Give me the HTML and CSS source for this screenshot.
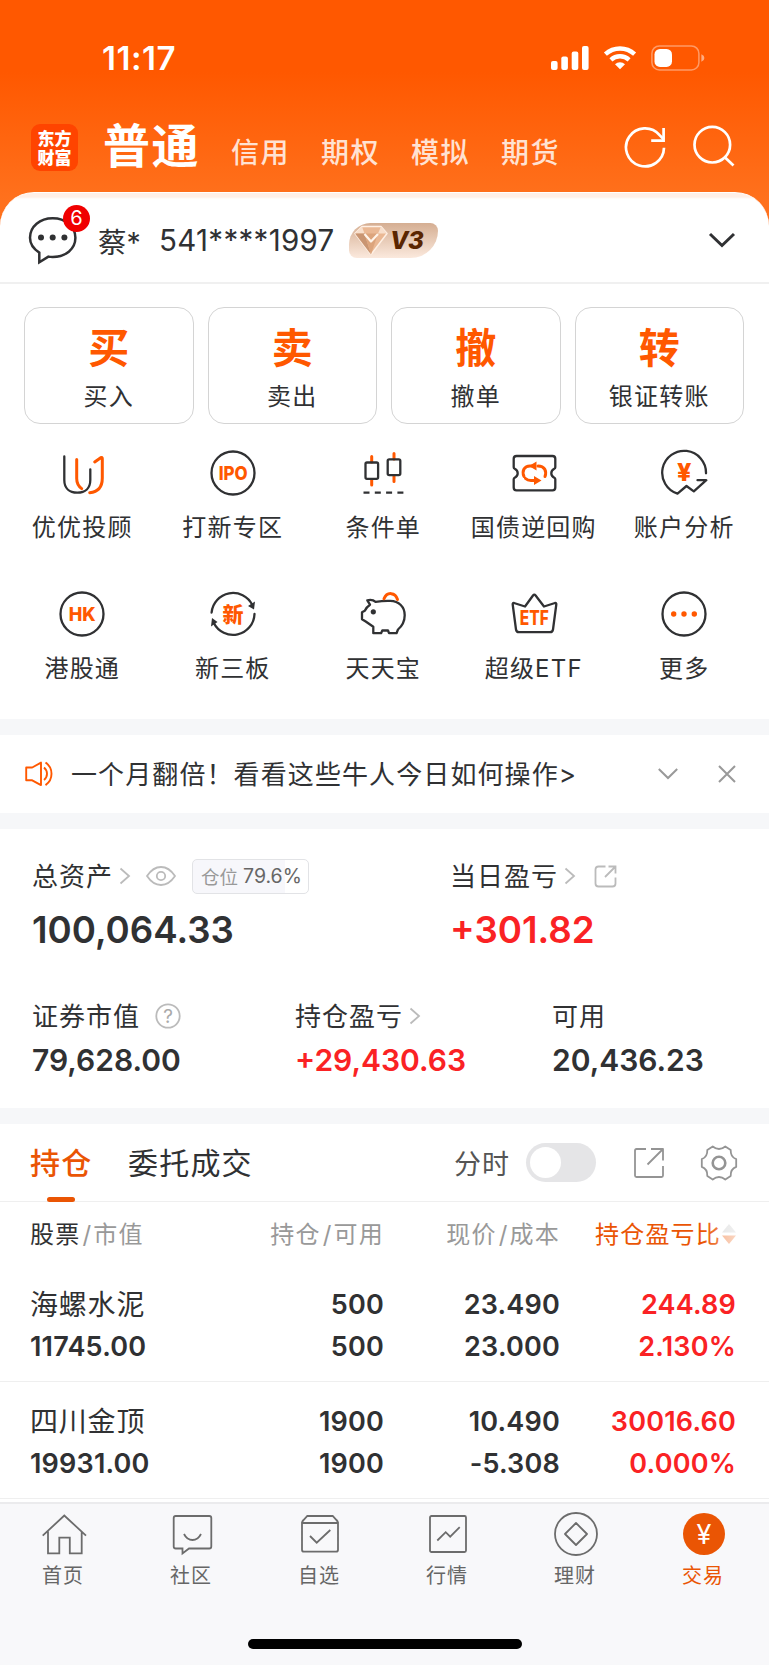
FILE: index.html
```html
<!DOCTYPE html>
<html lang="zh-CN">
<head>
  <meta charset="UTF-8" />
  <meta name="viewport" content="width=device-width, initial-scale=1.0"/>
  <title>交易</title>
  <link rel="stylesheet" href="styles.css">
</head>
<body>

  <header class="header">
    <div class="status-bar">
      <span class="time">11:17</span>
      <svg class="signal" width="38" height="24" viewBox="0 0 38 24" fill="#fff">
        <rect x="0" y="15" width="6.6" height="9" rx="2"/>
        <rect x="10.3" y="10.5" width="6.6" height="13.5" rx="2"/>
        <rect x="20.7" y="5.5" width="6.6" height="18.5" rx="2"/>
        <rect x="31" y="0" width="6.6" height="24" rx="2"/>
      </svg>
      <svg class="wifi" width="34" height="25" viewBox="0 0 34 25" fill="none" stroke="#fff" stroke-width="4.4">
        <path d="M2.4 9.2a21.5 21.5 0 0 1 29.2 0"/>
        <path d="M7.9 14.8a13.6 13.6 0 0 1 18.2 0"/>
        <path d="M17 24.3l-5-5a7.4 7.4 0 0 1 10 0z" fill="#fff" stroke="none"/>
      </svg>
      <svg class="battery" width="54" height="26" viewBox="0 0 54 26">
        <rect x="0.9" y="0.9" width="47" height="24" rx="7.5" fill="none" stroke="#fff" stroke-opacity=".4" stroke-width="1.5"/>
        <rect x="3.5" y="3.9" width="17.5" height="18" rx="5.5" fill="#fff"/>
        <path d="M50.4 9.2q3 1.2 3 3.8t-3 3.8z" fill="#fff" fill-opacity=".5"/>
      </svg>
    </div>

    <div class="top-nav">
      <div class="logo">东方<br>财富</div>
      <nav class="accounts">
        <span class="account-tab current">普通</span>
        <span class="account-tab">信用</span>
        <span class="account-tab">期权</span>
        <span class="account-tab">模拟</span>
        <span class="account-tab">期货</span>
      </nav>
      <svg class="refresh" width="44" height="44" viewBox="0 0 44 44" fill="none" stroke="#fff" stroke-width="2.7">
        <path d="M41 22.8A19 19 0 1 1 36.6 10.2L40.6 14.3"/>
        <path d="M40.6 3v12.6H28.2"/>
      </svg>
      <svg class="search" width="44" height="44" viewBox="0 0 44 44" fill="none" stroke="#fff" stroke-width="2.7">
        <circle cx="20.3" cy="19.7" r="17.8"/>
        <path d="M32.5 32l9 8.6"/>
      </svg>
    </div>
  </header>

  <main>
    <section class="user-row">
      <div class="message">
        <svg width="50" height="50" viewBox="0 0 50 50" fill="none" stroke="#303133" stroke-width="2.5">
          <path d="M11.3 47.3V37.6C5.3 33.8 2 28.6 2 22.8 2 11.4 12 3.3 24.7 3.3S47.4 11.4 47.4 22.8 37.4 42 24.7 42c-1.5 0-3-.1-4.3-.4z"/>
          <g fill="#303133" stroke="none"><circle cx="13" cy="22.6" r="3"/><circle cx="24.7" cy="22.6" r="3"/><circle cx="36.4" cy="22.6" r="3"/></g>
        </svg>
        <span class="badge">6</span>
      </div>
      <span class="user-name">蔡*</span>
      <span class="user-id">541****1997</span>
      <div class="level">
        <svg width="34" height="31" viewBox="0 0 34 31" stroke-linejoin="round">
          <path d="M8 1.5h19l6 7-16 21L1 8.5z" fill="#eab894" stroke="#fff0e4" stroke-width="1.5"/>
          <path d="M8 1.5l2.5 7H1zM27 1.5l-3 7h9z" fill="#f8dfcc"/>
          <path d="M10.5 8.5L17 29.5 1 8.5z" fill="#c99572"/>
          <path d="M10.5 8.5H24l-7 21z" fill="#dca47c"/>
          <path d="M10.5 9l6.5 7.5L24 9" fill="none" stroke="#fff4ea" stroke-width="2.2"/>
        </svg>
        <span class="level-text">V3</span>
      </div>
      <svg class="expand" width="28" height="18" viewBox="0 0 28 18" fill="none" stroke="#303133" stroke-width="3"><path d="M2 3l12 11.5L26 3"/></svg>
    </section>

    <section class="actions">
      <div class="action"><b>买</b><span>买入</span></div>
      <div class="action"><b>卖</b><span>卖出</span></div>
      <div class="action"><b>撤</b><span>撤单</span></div>
      <div class="action"><b>转</b><span>银证转账</span></div>
    </section>

    <section class="services">
      <div class="service">
        <svg viewBox="0 0 48 48"><path class="dark" d="M6.3 7.5V31c0 8 5 12.7 13 12.7s13-4.7 13-12.7V20.3"/><path class="hot" d="M18.7 10.6V29.5q0 6.5 5 10.1M36.7 13l6-4.3q1.600-.8 1.600 1.100V29c0 9.500-4.800 14-12.600 14.700"/></svg>
        <span>优优投顾</span>
      </div>
      <div class="service">
        <svg viewBox="0 0 48 48"><circle class="dark" cx="24" cy="24" r="21.5"/><text class="icon-text" x="24.2" y="31" font-size="19" textLength="29" lengthAdjust="spacingAndGlyphs">IPO</text></svg>
        <span>打新专区</span>
      </div>
      <div class="service">
        <svg viewBox="0 0 48 48"><path class="hot" d="M12.7 7.5V13M12.7 31v5M35 4.5V10M35 27v5.5"/><rect class="dark" x="6.5" y="13.5" width="12.6" height="16.3" rx="1.5"/><rect class="dark" x="28.7" y="10.3" width="12.6" height="15.8" rx="1.5"/><path class="dark dashed" d="M4.5 43.6h40"/></svg>
        <span>条件单</span>
      </div>
      <div class="service">
        <svg viewBox="0 0 48 48"><path class="dark" d="M6.5 7h36q2.8 0 2.8 2.8v8.5q0 1-1 1.5-3 1.5-3 4.5t3 4.5q1 .5 1 1.5v8.2q0 2.8-2.8 2.8h-36q-2.8 0-2.8-2.8v-8.2q0-1 1-1.5 3-1.5 3-4.5t-3-4.5q-1-.5-1-1.5V9.800Q3.700 7 6.500 7z"/><path class="hot" d="M14 27.500c-2.500-6 .5-10.600 6-10.600M28 16.900c6.500 0 9 5 7 10.600M15.500 29.500q2 2 5.500 2h4M20 16.900h3"/><path class="fill" d="M19 17l7.500-4.500v9zM31.500 31.500L24 27v9z"/></svg>
        <span>国债逆回购</span>
      </div>
      <div class="service">
        <svg viewBox="0 0 48 48"><path class="dark" d="M46 24.3A21.900 21.900 0 1 0 17.500 44.600L26.500 37l7.300 5.400L46.300 31.200h-8.800"/><text class="icon-text" x="24.3" y="31.5" font-size="25">¥</text></svg>
        <span>账户分析</span>
      </div>
      <div class="service">
        <svg viewBox="0 0 48 48"><circle class="dark" cx="24" cy="24" r="21.5"/><text class="icon-text" x="24.2" y="31" font-size="19" textLength="27" lengthAdjust="spacingAndGlyphs">HK</text></svg>
        <span>港股通</span>
      </div>
      <div class="service">
        <svg viewBox="0 0 48 48"><path class="dark" d="M2.600 22.500A21.500 21.500 0 0 1 43.300 15M45.500 24A21.500 21.500 0 0 1 4.800 33"/><path fill="#303133" d="M46 11.500l-1 8-6-3.500zM2 36.500l1-8.500 5.500 4z"/><text class="icon-text" x="24" y="31.5" font-size="21">新</text></svg>
        <span>新三板</span>
      </div>
      <div class="service">
        <svg viewBox="0 0 48 48"><path class="dark" d="M8.300 10.300q5-1.300 8.300 1.600 8-1.300 14.500-1c9 .3 14.600 6 14.600 14.300 0 7-3.500 11.500-6.700 14.300L37.500 43.200h-7.500l-1-2.700H23.300l-1.200 2.700h-7.800V36.700L6.700 31.500l-3.700-2.300v-7l2.800-1.500q1.500-3.500 5.200-6z"/><circle cx="14.3" cy="21.8" r="2.6" fill="#303133"/><path class="hot" d="M25 8.800c3-7.500 11.500-6.500 13.500.7"/></svg>
        <span>天天宝</span>
      </div>
      <div class="service">
        <svg viewBox="0 0 48 48"><path class="dark" d="M4 13l11 3.500L23 5.500q1.300-1.700 2.600 0L34 16.500 45 13q1.500-.2 1.300 1.500L43 39.500q-.4 2.700-3 2.700H9q-2.600 0-3-2.700L2.700 14.500Q2.500 12.800 4 13z"/><text class="icon-text" x="24.3" y="34.5" font-size="20" textLength="29" lengthAdjust="spacingAndGlyphs">ETF</text></svg>
        <span>超级ETF</span>
      </div>
      <div class="service">
        <svg viewBox="0 0 48 48"><circle class="dark" cx="24" cy="24" r="21.5"/><g class="fill"><circle cx="13.7" cy="24" r="2.7"/><circle cx="24" cy="24" r="2.7"/><circle cx="34.3" cy="24" r="2.7"/></g></svg>
        <span>更多</span>
      </div>
    </section>

    <section class="notice">
      <svg width="28" height="26" viewBox="0 0 28 26" fill="none" stroke="#ff5800" stroke-width="1.9" stroke-linejoin="round">
        <path d="M1.200 6.500h6L16 1.600v22.500l-8.800-4.800h-6z"/>
        <path d="M19 6.500q3 2.500 3 6.300T19 19M20.500 1.500q6 4 6 11.300t-6 11.300"/>
      </svg>
      <p>一个月翻倍！看看这些牛人今日如何操作&gt;</p>
      <svg class="fold" width="20" height="14" viewBox="0 0 20 14" fill="none" stroke="#999" stroke-width="2"><path d="M.8 2l9.200 9L19.200 2"/></svg>
      <svg class="close" width="18" height="18" viewBox="0 0 18 18" fill="none" stroke="#999" stroke-width="2"><path d="M1 1l16 16M17 1L1 17"/></svg>
    </section>

    <section class="assets">
      <div class="totals">
        <div class="asset">
          <div class="label"><span>总资产</span>
            <svg class="arrow" width="12" height="18" viewBox="0 0 12 18"><path d="M1.500 1.500L10 9l-8.500 7.500"/></svg>
            <svg class="eye" width="30" height="20" viewBox="0 0 30 20"><path d="M1 10Q7 1 15 1t14 9q-6 9-14 9T1 10z"/><circle cx="15" cy="10" r="4.2"/></svg>
            <div class="position">仓位<em>79.6%</em></div>
          </div>
          <div class="amount">100,064.33</div>
        </div>
        <div class="asset">
          <div class="label"><span>当日盈亏</span>
            <svg class="arrow" width="12" height="18" viewBox="0 0 12 18"><path d="M1.500 1.500L10 9l-8.500 7.500"/></svg>
            <svg class="share" width="23" height="23" viewBox="0 0 23 23"><path d="M11.500 1.500H4.500q-3 0-3 3v14q0 3 3 3h14q3 0 3-3v-6M14.500 1.500h7v7M21 2L11 12"/></svg>
          </div>
          <div class="amount up">+301.82</div>
        </div>
      </div>
      <div class="details">
        <div class="asset">
          <div class="label"><span>证券市值</span>
            <svg class="help" width="26" height="26" viewBox="0 0 26 26"><circle cx="13" cy="13" r="11.7"/><text x="13" y="20">?</text></svg>
          </div>
          <div class="amount">79,628.00</div>
        </div>
        <div class="asset">
          <div class="label"><span>持仓盈亏</span>
            <svg class="arrow" width="12" height="18" viewBox="0 0 12 18"><path d="M1.500 1.500L10 9l-8.500 7.500"/></svg>
          </div>
          <div class="amount up">+29,430.63</div>
        </div>
        <div class="asset">
          <div class="label"><span>可用</span></div>
          <div class="amount">20,436.23</div>
        </div>
      </div>
    </section>

    <section class="holdings">
      <div class="tabs">
        <span class="tab active">持仓</span>
        <span class="tab">委托成交</span>
        <span class="switch-label">分时</span>
        <span class="switch"></span>
        <svg class="export" width="32" height="32" viewBox="0 0 32 32"><path d="M13 2H3.500Q2 2 2 3.500v25Q2 30 3.500 30h25q1.500 0 1.500-1.500V19M18 2h12v11.500M29.500 2.500L14.500 17.500"/></svg>
        <svg class="gear" width="38" height="38" viewBox="0 0 38 38"><path d="M12.700 2.500q6.300 5 12.600 0l5.400 3.600q-.3 6.900 5.500 9v7.800q-5.800 2.100-5.500 9l-5.400 3.600q-6.300-5-12.600 0l-5.400-3.600q.3-6.900-5.500-9v-7.800q5.800-2.100 5.500-9z"/><circle cx="19" cy="19" r="6.3"/></svg>
      </div>

      <div class="row table-head">
        <span><i>股票</i><em>/</em>市值</span>
        <span>持仓<em>/</em>可用</span>
        <span>现价<em>/</em>成本</span>
        <span class="sort">持仓盈亏比<svg width="16" height="22" viewBox="0 0 16 22"><path d="M8 1l7 8.500H1z" fill="#dedede"/><path d="M8 21l7-8.500H1z" fill="#f5a67a"/></svg></span>
      </div>
      <div class="row stock">
        <div><p class="name">海螺水泥</p><p>11745.00</p></div>
        <div><p>500</p><p>500</p></div>
        <div><p>23.490</p><p>23.000</p></div>
        <div class="up"><p>244.89</p><p>2.130%</p></div>
      </div>
      <div class="row stock">
        <div><p class="name">四川金顶</p><p>19931.00</p></div>
        <div><p>1900</p><p>1900</p></div>
        <div><p>10.490</p><p>-5.308</p></div>
        <div class="up"><p>30016.60</p><p>0.000%</p></div>
      </div>
    </section>
  </main>

  <footer class="footer">
    <nav class="bottom-nav">
      <a class="nav-item"><svg viewBox="0 0 48 48"><path d="M2.700 25.700L24.300 5.500 46 25.700M8 21.500v21.800h11.300V27.700h10.500v15.600h11.900V21.500"/></svg><span>首页</span></a>
      <a class="nav-item"><svg viewBox="0 0 48 48"><path d="M7.700 6h33.600q2 0 2 2v28.500q0 2-2 2H21l-6.500 5v-5H7.700q-2 0-2-2V8q0-2 2-2zM16 24q3 6 8.500 6t8.500-6"/></svg><span>社区</span></a>
      <a class="nav-item"><svg viewBox="0 0 48 48"><path d="M6 13v26.700q0 2 2 2h32q2 0 2-2V13zM6 13q0-1.500 1.500-3L11.300 6h25.400l3.800 4Q42 11.500 42 13M14 26l6.700 6.700L34.300 20"/></svg><span>自选</span></a>
      <a class="nav-item"><svg viewBox="0 0 48 48"><rect x="6" y="6" width="36" height="36" rx="1.5"/><path d="M13.300 30.500l8.400-8.300 4.500 4.500 9.500-9.500"/></svg><span>行情</span></a>
      <a class="nav-item"><svg viewBox="0 0 48 48"><circle cx="24" cy="24" r="21"/><path d="M24 13L35 24 24 35 13 24z" stroke-linejoin="round"/></svg><span>理财</span></a>
      <a class="nav-item selected"><svg viewBox="0 0 48 48"><circle cx="24" cy="24" r="21"/><text x="24" y="34">¥</text></svg><span>交易</span></a>
    </nav>
    <div class="home-indicator"></div>
  </footer>

</body>
</html>
```
FILE: styles.css
```css
* {
  box-sizing: border-box;
}

body {
  margin: 0;
  width: 769px;
  height: 1665px;
  overflow: hidden;
  background: #fff;
  color: #303133;
  font-family: Inter, "Noto Sans CJK SC", sans-serif;
}

p {
  margin: 0;
}

em, i {
  font-style: normal;
}

svg {
  display: block;
  flex-shrink: 0;
}

.up {
  color: #fa2224;
}

/* orange header */
.header {
  height: 236px;
  background: linear-gradient(#ff5800 0, #ff5800 72px, #ff711d 200px);
}

.status-bar {
  display: flex;
  align-items: center;
  height: 115px;
  padding-left: 102px;
}

.time {
  width: 449px;
  font-size: 33px;
  font-weight: 600;
  letter-spacing: 0.5px;
  color: #fff;
}

.wifi {
  margin-left: 14px;
}

.battery {
  margin-left: 14px;
}

.top-nav {
  display: flex;
  align-items: center;
  height: 64px;
  padding-left: 31px;
}

.logo {
  width: 47px;
  height: 47px;
  padding-top: 4px;
  border-radius: 9px;
  background: #ff4400;
  color: #fff;
  font-family: "Noto Sans CJK SC", sans-serif;
  font-size: 17px;
  font-weight: 900;
  line-height: 19px;
  text-align: center;
}

.accounts {
  display: flex;
  align-items: baseline;
  gap: 31px;
  width: 546px;
  margin-top: 5px;
  margin-left: 25px;
}

.account-tab {
  color: rgba(255, 255, 255, 0.82);
  font-size: 28px;
  font-weight: 500;
  letter-spacing: 1.5px;
  line-height: 60px;
}

.account-tab.current {
  color: #fff;
  font-size: 47px;
  font-weight: 700;
}

.refresh {
  margin-left: -26px;
}

.search {
  margin-left: 25px;
}

/* account line */
.user-row {
  position: relative;
  display: flex;
  align-items: center;
  height: 92px;
  margin-top: -44px;
  padding-top: 5px;
  padding-left: 28px;
  border-top: 1px solid #fff;
  border-bottom: 2px solid #f0f0f0;
  border-radius: 34px 34px 0 0;
  background: linear-gradient(#fff0e8 0, #fff0e8 4px, #fff 6px);
}

.message {
  position: relative;
}

.badge {
  position: absolute;
  top: -10px;
  left: 35px;
  width: 27px;
  height: 27px;
  border-radius: 50%;
  background: #f00000;
  color: #fff;
  font-size: 20px;
  line-height: 27px;
  text-align: center;
}

.user-name {
  width: 61px;
  margin-left: 20px;
  font-size: 28.5px;
}

.user-id {
  width: 190px;
  font-size: 29.5px;
  letter-spacing: 0.3px;
}

.level {
  display: flex;
  align-items: center;
  width: 89px;
  height: 35px;
  padding-left: 5px;
  border-radius: 22px 8px 28px 8px;
  background: linear-gradient(#d5ae92, #fbe9dd);
}

.level-text {
  margin-left: 2px;
  color: #5a2500;
  font-size: 24px;
  font-style: italic;
  font-weight: 800;
  letter-spacing: -0.5px;
}

.expand {
  margin-left: 270px;
}

/* trade buttons */
.actions {
  display: grid;
  grid-template-columns: repeat(4, 1fr);
  gap: 14px;
  padding: 23px 25px 0 24px;
}

.action {
  display: flex;
  flex-direction: column;
  align-items: center;
  height: 117px;
  padding-top: 16px;
  border: 1px solid #d4d4d4;
  border-radius: 16px;
}

.action b {
  color: #ff5800;
  font-size: 41px;
  font-weight: 700;
  line-height: 48px;
}

.action span {
  font-size: 24px;
  letter-spacing: 1.2px;
  line-height: 50px;
}

.services {
  display: grid;
  grid-template-columns: repeat(5, 150.5px);
  grid-auto-rows: 141px;
  height: 295px;
  padding: 25px 8px 0 7px;
}

.service {
  display: flex;
  flex-direction: column;
  align-items: center;
}

.service svg {
  width: 48px;
  height: 48px;
}

.service span {
  margin-top: 13px;
  font-size: 24px;
  letter-spacing: 1.2px;
  line-height: 36px;
}

.dark, .hot {
  fill: none;
  stroke: #303133;
  stroke-width: 2.3;
  stroke-linecap: round;
  stroke-linejoin: round;
}

.hot {
  stroke: #ff5800;
  stroke-width: 3;
}

.dashed {
  stroke-linecap: butt;
  stroke-dasharray: 6 5.3;
}

.fill {
  fill: #ff5800;
}

.icon-text {
  fill: #ff5800;
  font-weight: 800;
  text-anchor: middle;
}

/* notice */
.notice {
  display: flex;
  align-items: center;
  height: 110px;
  padding-left: 25px;
  border-top: 16px solid #f6f7f9;
  border-bottom: 16px solid #f6f7f9;
}

.notice p {
  width: 587px;
  margin-left: 18px;
  padding-bottom: 4px;
  font-size: 26px;
  letter-spacing: 1.1px;
}

.close {
  margin-left: 40px;
}

/* assets */
.assets {
  height: 295px;
  padding: 28px 32px 0;
  border-bottom: 16px solid #f6f7f9;
}

.totals {
  display: grid;
  grid-template-columns: 418px 1fr;
  height: 140px;
}

.details {
  display: grid;
  grid-template-columns: 263px 257px 1fr;
}

.label {
  display: flex;
  align-items: center;
  height: 38px;
  font-size: 26px;
  letter-spacing: 1px;
}

.label > span {
  padding-bottom: 4px;
}

.amount {
  font-size: 30px;
  font-weight: 600;
  line-height: 50px;
}

.totals .amount {
  margin-top: 10px;
  font-size: 36.7px;
}

.arrow, .eye, .share, .help {
  fill: none;
  stroke: #bbb;
  stroke-width: 1.8;
}

.arrow {
  margin-left: 6px;
}

.eye {
  margin-left: 15px;
}

.share {
  margin-left: 18px;
}

.help {
  margin-left: 15px;
}

.help text {
  fill: #aaa;
  stroke: none;
  font-size: 19px;
  letter-spacing: 0;
  text-anchor: middle;
}

.position {
  display: flex;
  align-items: center;
  width: 117px;
  height: 35px;
  margin-left: 16px;
  padding-left: 8px;
  border: 1px solid #e2e3e6;
  border-radius: 5px;
  background: linear-gradient(90deg, #f7f7fb 79.6%, #fff 79.6%);
  color: #999;
  font-size: 18.5px;
  letter-spacing: 0;
}

.position em {
  margin-left: 5px;
  color: #666;
  font-size: 19.5px;
}

/* holdings */
.tabs {
  position: relative;
  display: flex;
  align-items: center;
  height: 78px;
  padding-left: 30px;
  border-bottom: 1px solid #efefef;
}

.tab {
  position: relative;
  width: 98px;
  font-size: 30px;
  letter-spacing: 1.2px;
  line-height: 76px;
}

.tab + .tab {
  width: 326px;
}

.tab.active {
  color: #ea5504;
  font-weight: 500;
}

.tab.active::after {
  content: "";
  position: absolute;
  bottom: -1px;
  left: 17px;
  width: 28px;
  height: 5px;
  border-radius: 2.5px;
  background: #ea5504;
}

.switch-label {
  width: 72px;
  color: #555;
  font-size: 27px;
  letter-spacing: 1px;
}

.switch {
  width: 70px;
  height: 39px;
  padding: 4px;
  border-radius: 20px;
  background: #e5e5e7;
}

.switch::before {
  content: "";
  display: block;
  width: 31px;
  height: 31px;
  border-radius: 50%;
  background: #fff;
}

.export, .gear {
  fill: none;
  stroke: #949494;
  stroke-width: 1.8;
  stroke-linejoin: round;
}

.export {
  margin-left: 37px;
}

.gear {
  margin-left: 35px;
}

.gear circle {
  stroke-width: 2.6;
}

.row {
  display: grid;
  grid-template-columns: 170px 184px 176px 176px;
  padding-left: 30px;
}

.row > * + * {
  text-align: right;
}

.table-head {
  height: 63px;
  color: #999;
  font-size: 24px;
  letter-spacing: 1.2px;
  line-height: 65px;
}

.table-head i {
  color: #303133;
}

.table-head em {
  margin: 0 1px 0 2px;
}

.table-head > .sort {
  position: relative;
  display: flex;
  align-items: center;
  justify-content: flex-end;
  height: 64px;
  margin-right: -1px;
  color: #ea5504;
  white-space: nowrap;
}

/* fades the end of the last column */
.sort::after {
  content: "";
  position: absolute;
  right: 0;
  width: 34px;
  height: 32px;
  background: linear-gradient(90deg, rgba(255, 255, 255, 0), rgba(255, 255, 255, 0.55));
}

.stock {
  height: 117px;
  padding-top: 19px;
  border-bottom: 1px solid #efefef;
  font-size: 27px;
  font-weight: 600;
  letter-spacing: 0.2px;
  line-height: 42px;
}

.stock .name {
  font-size: 28px;
  font-weight: 400;
  letter-spacing: 0.8px;
}

/* bottom bar */
.footer {
  height: 163px;
  margin-top: 3px;
  border-top: 2px solid #ebebed;
  background: #f8f8fa;
}

.bottom-nav {
  display: grid;
  grid-template-columns: repeat(6, 128px);
  height: 135px;
  padding-top: 6px;
}

.nav-item {
  display: flex;
  flex-direction: column;
  align-items: center;
  color: #666;
  font-size: 20px;
  letter-spacing: 1px;
}

.nav-item svg {
  width: 48px;
  height: 48px;
  fill: none;
  stroke: #6c6c6c;
  stroke-width: 1.8;
}

.nav-item span {
  margin-top: 4px;
  margin-right: 2px;
  line-height: 28px;
}

.nav-item.selected {
  color: #ea5504;
}

.selected circle {
  fill: #ea5504;
  stroke: none;
}

.selected text {
  fill: #fff;
  stroke: none;
  font-size: 27px;
  text-anchor: middle;
  letter-spacing: 0;
}

.home-indicator {
  width: 274px;
  height: 10px;
  margin: 0 auto;
  border-radius: 5px;
  background: #000;
}
```
